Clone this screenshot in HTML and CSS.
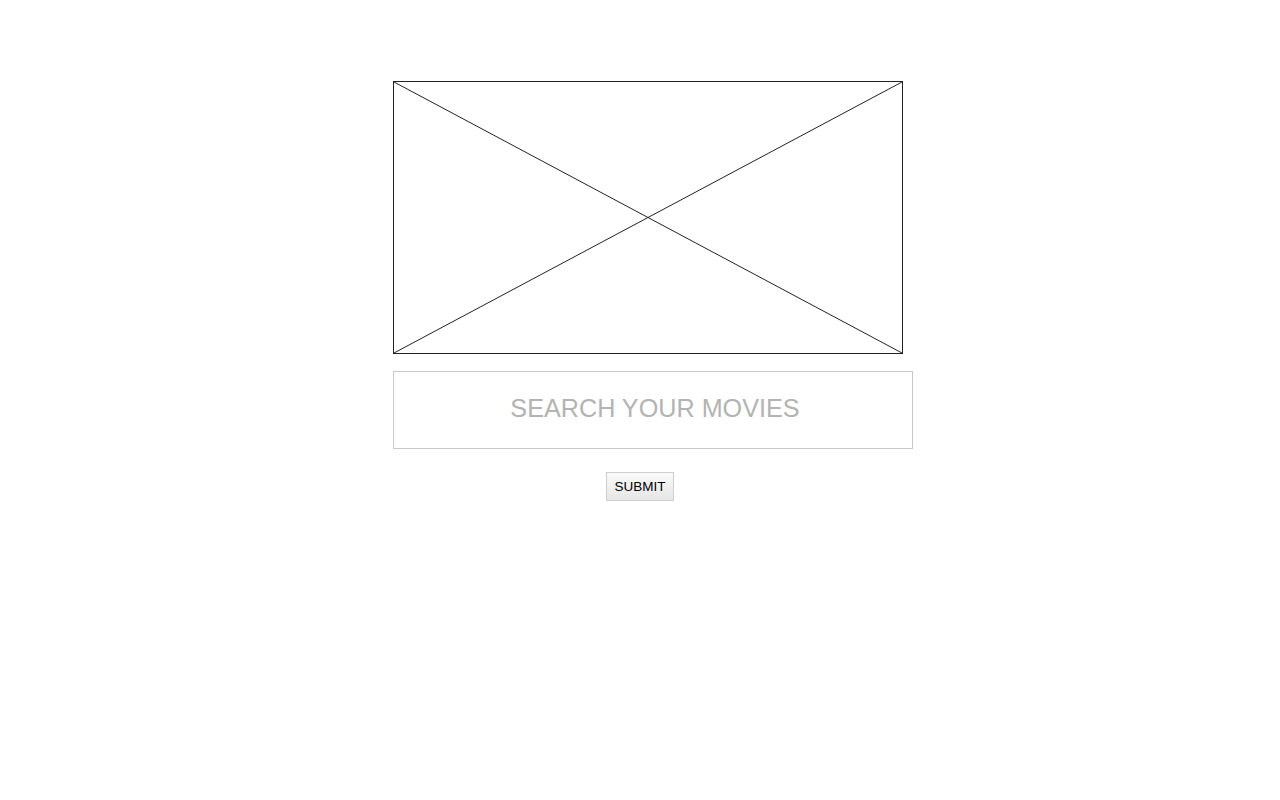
FILE: index.html
```html
<!DOCTYPE html>
<html lang="en">
<head>
<meta charset="utf-8">
<title>Search your movies</title>
<link rel="stylesheet" href="styles.css">
</head>
<body>
<main class="stage">
  <div class="placeholder">
    <svg class="cross" viewBox="0 0 510 273" preserveAspectRatio="none" aria-hidden="true">
      <line x1="0" y1="0" x2="510" y2="273"/>
      <line x1="510" y1="0" x2="0" y2="273"/>
    </svg>
  </div>
  <input class="search" type="text" placeholder="SEARCH YOUR MOVIES">
  <button class="submit" type="button">SUBMIT</button>
</main>
</body>
</html>
```
FILE: styles.css
```css
html, body {
  margin: 0;
  padding: 0;
  background: #fff;
  font-family: "Liberation Sans", Arial, sans-serif;
}

.stage {
  width: 494px;
  margin: 0 auto;
  padding-top: 81px;
  display: flex;
  flex-direction: column;
  align-items: flex-start;
}

.placeholder {
  box-sizing: border-box;
  width: 510px;
  height: 273px;
  border: 1px solid #222;
  flex-shrink: 0;
}

.cross {
  display: block;
  width: 100%;
  height: 100%;
}

.cross line {
  stroke: #222;
  stroke-width: 1;
  vector-effect: non-scaling-stroke;
}

.search {
  box-sizing: border-box;
  width: 520px;
  height: 78px;
  margin-top: 17px;
  border: 1px solid #c8c8c8;
  padding: 0 0 4px 4px;
  text-align: center;
  font-family: "Liberation Sans", Arial, sans-serif;
  font-size: 25.2px;
  color: #333;
  outline: none;
  flex-shrink: 0;
}

.search::placeholder {
  color: #b3b3b3;
  opacity: 1;
}

.submit {
  align-self: center;
  box-sizing: border-box;
  margin-top: 23px;
  height: 29px;
  width: 68px;
  padding: 0;
  border: 1px solid #cfcfcf;
  border-radius: 0;
  background: linear-gradient(#fafafa, #e6e6e6);
  font-family: "Liberation Sans", Arial, sans-serif;
  font-size: 13.5px;
  color: #000;
}
```
